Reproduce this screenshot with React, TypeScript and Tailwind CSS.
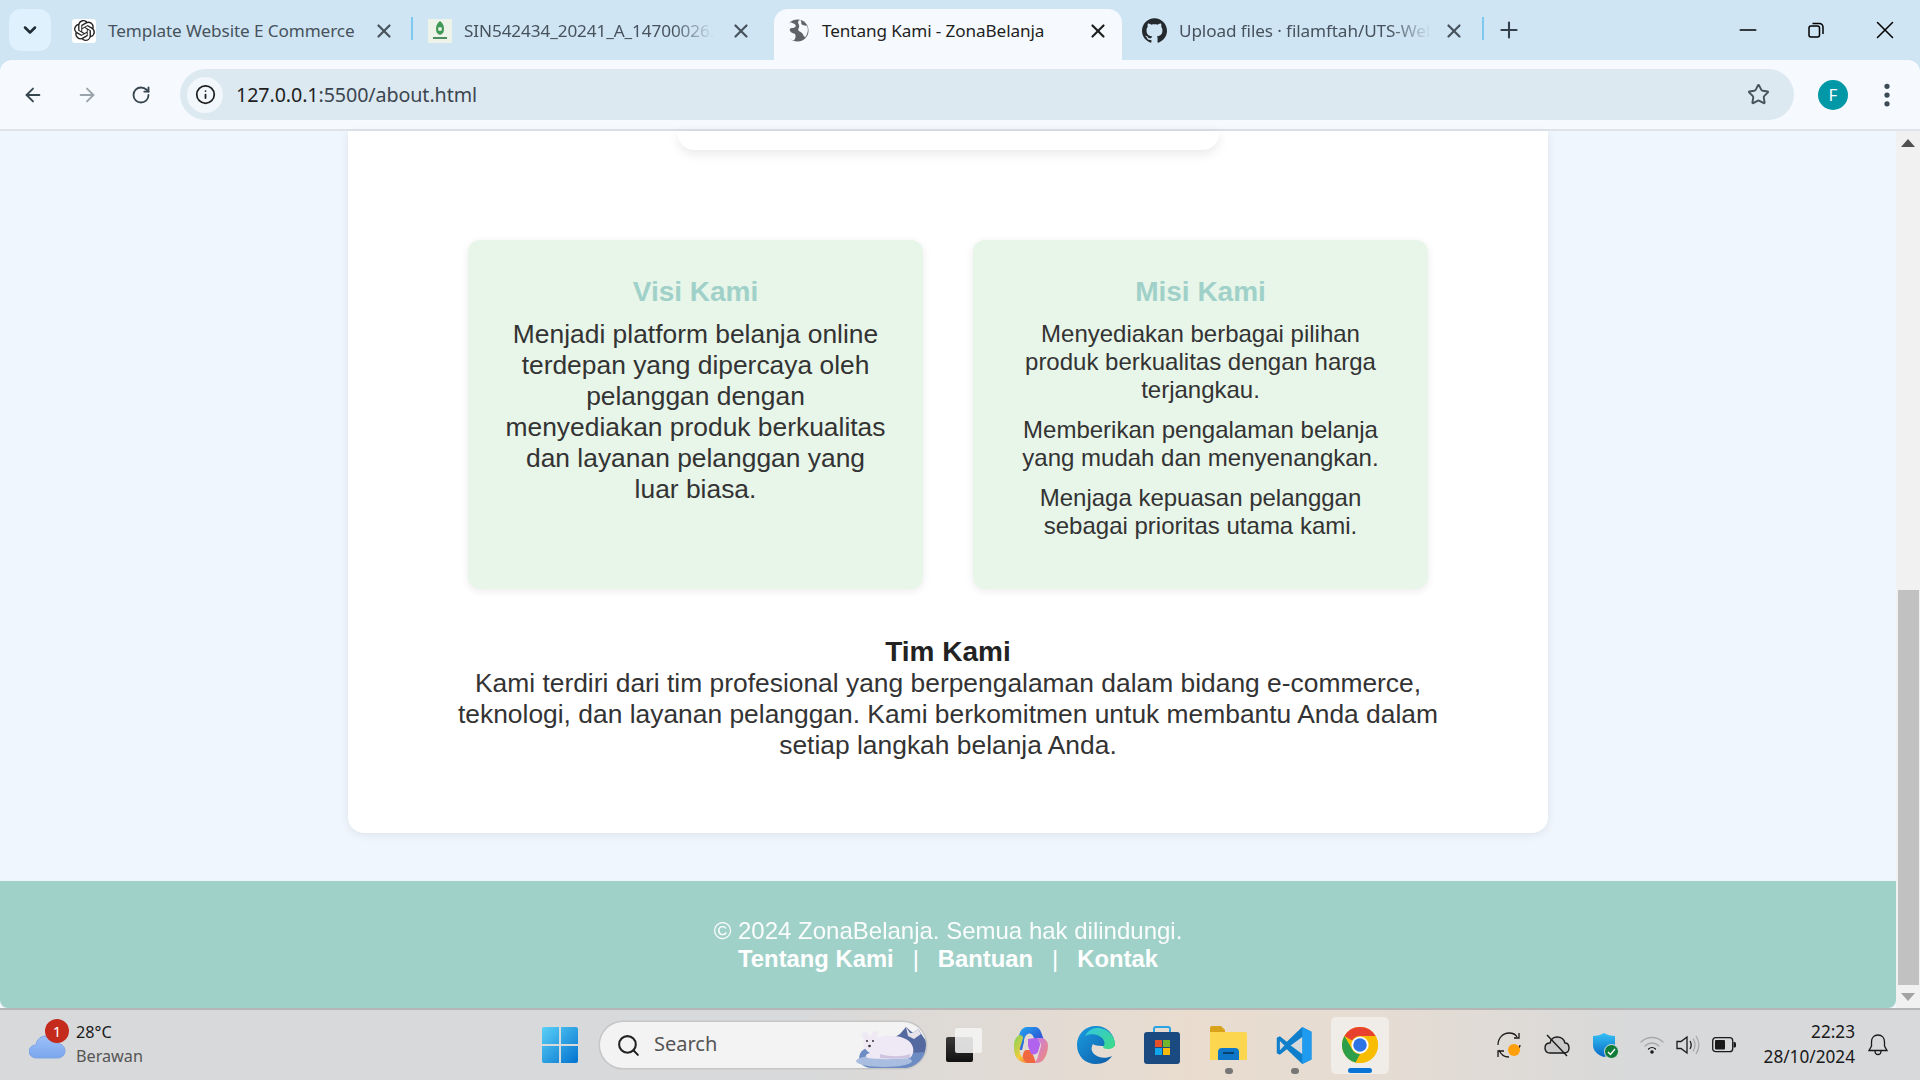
import React from "react";
import { SiOpenai, SiGithub } from "react-icons/si";
import { ArrowLeft, ArrowRight, RotateCw, Info, Star, Plus, X, Minus, ChevronDown, Search, MoreVertical } from "lucide-react";

const Sep = () => <div className="w-[2px] h-[23px] bg-[#7cc8ef] shrink-0" />;

function Tab({ icon, title, w, active, fade, sep, iconBox, closeMr }: { icon: React.ReactNode; title: string; w: string; active?: boolean; fade?: boolean; sep?: boolean; iconBox: string; closeMr: string }) {
  return (
    <div className={`${w} h-[51px] shrink-0 flex items-center relative pb-[8px] ${active ? "bg-[#f6fafe] rounded-t-[14px]" : ""}`}>
      <div className={`w-[24px] h-[24px] ${iconBox} shrink-0 flex items-center justify-center`}>{icon}</div>
      <div className={`whitespace-nowrap text-[17.15px] tracking-[-0.1px] ${active ? "text-[#1f1f1f]" : "text-[#47525c]"} ${fade ? "[mask-image:linear-gradient(90deg,#000_82%,transparent_98%)]" : ""}`}>{title}</div>
      <div className={`ml-auto ${closeMr} shrink-0`}><X size={22} strokeWidth={2.4} className={active ? "text-[#1f1f1f]" : "text-[#47525c]"} /></div>
      {sep && <div className="absolute right-[-1px] top-[8px]"><Sep /></div>}
    </div>
  );
}

const Globe = () => (
  <svg width="23" height="23" viewBox="0 0 24 24">
    <circle cx="12" cy="12" r="11.5" fill="#5f6368" />
    <path d="M5 3.5c2 1.5 4 1 5 3s-2 3-4 3-3 2-1 4 5 1 5 4-1 4-2 5c-5-1-9-6-9-11 0-3 2-6 6-8zM15 1c2 2 0 4 2 5s4 1 5 1c2 5 0 9-2 12-2-1-2-4-4-5s-4-2-3-4 1-3 0-5 0-4 2-4z" fill="#f6fafe" />
  </svg>
);

const Thesis = () => (
  <div className="w-[24px] h-[24px] bg-[#eef3ea] flex items-center justify-center">
    <svg width="16" height="22" viewBox="0 0 16 22">
      <path d="M8 1c3 2 4 5 4 8s-1 5-4 6c-3-1-4-3-4-6s1-6 4-8z" fill="#3f9a57" />
      <circle cx="8" cy="9" r="2" fill="#e6efe2" />
      <rect x="1" y="17" width="14" height="2" fill="#4b8d5f" />
    </svg>
  </div>
);

const Cloud = () => (
  <svg width="37" height="26" viewBox="0 0 37 26">
    <defs><linearGradient id="c" x1="0" y1="0" x2="0" y2="1"><stop offset="0" stopColor="#9cc0fa" /><stop offset="1" stopColor="#7ba6ec" /></linearGradient></defs>
    <path d="M8 25C3 25 0 22 0 18.500S3 12 7 12C8 6 12 3 17 3c5 0 8 3 9 7 6 0 10 3 10 8 0 4-3 7-8 7z" fill="url(#c)" stroke="#7fa5e6" strokeWidth="1" />
  </svg>
);

const WinLogo = () => (
  <svg width="36" height="36" viewBox="0 0 36 36">
    <defs><linearGradient id="w" x1="0" y1="0" x2="1" y2="1"><stop offset="0" stopColor="#5ad0f7" /><stop offset="1" stopColor="#0272cf" /></linearGradient></defs>
    <path d="M2 0h15v17H0V2a2 2 0 012-2zM19 0h15a2 2 0 012 2v15H19zM0 19h17v17H2a2 2 0 01-2-2zM19 19h17v15a2 2 0 01-2 2H19z" fill="url(#w)" />
  </svg>
);

const Bear = () => (
  <svg width="76" height="44" viewBox="0 0 76 44">
    <path d="M40 16l10-6 6-7 7 6 5-4 8 12v27H30z" fill="#53699f" />
    <path d="M56 3l4 6 3 0 5-4 3 5-7 5-6-3z" fill="#e5e2ea" />
    <path d="M10 30C14 22 24 22 40 26s36 2 36 2v16H22C12 44 7 37 10 30z" fill="#6d8cc4" />
    <ellipse cx="34" cy="37" rx="28" ry="6" fill="#a9bde0" />
    <path d="M14 14c4-4 10-3 13 0 10-4 26-3 33 4 5 6 4 12 0 16-12 1-28 2-42 0-3-1-3-4 2-5-6-3-8-10-6-15z" fill="#efe8f5" />
    <path d="M30 30c10 3 22 3 30 0v4c-12 1-22 1-30 0z" fill="#cfc4e0" />
    <circle cx="15" cy="11" r="3" fill="#efe8f5" /><circle cx="25" cy="10" r="3" fill="#efe8f5" />
    <circle cx="17" cy="17" r="1" fill="#333" /><circle cx="23" cy="17" r="1" fill="#333" /><circle cx="19.500" cy="22" r="1.300" fill="#333" />
  </svg>
);

const TaskView = () => (
  <svg width="36" height="34" viewBox="0 0 36 34">
    <defs><linearGradient id="tv" x1="0" y1="0" x2="0" y2="1"><stop offset="0" stopColor="#3a3a3a" /><stop offset="1" stopColor="#111" /></linearGradient></defs>
    <rect x="0" y="9" width="27" height="25" rx="2" fill="url(#tv)" />
    <rect x="9" y="0" width="27" height="25" rx="2" fill="#f4f4f4" fillOpacity="0.88" />
  </svg>
);

const Copilot = () => (
  <svg width="38" height="38" viewBox="0 0 38 38">
    <defs>
      <linearGradient id="cp1" x1="0" y1="0" x2="1" y2="1"><stop offset="0" stopColor="#1fb0f2" /><stop offset="0.6" stopColor="#2b62d8" /><stop offset="1" stopColor="#6d45dc" /></linearGradient>
      <linearGradient id="cp2" x1="0" y1="0" x2="1" y2="1"><stop offset="0" stopColor="#7cd65a" /><stop offset="0.55" stopColor="#f6c93c" /><stop offset="1" stopColor="#f0573f" /></linearGradient>
      <linearGradient id="cp3" x1="0" y1="0" x2="1" y2="1"><stop offset="0" stopColor="#c77bf2" /><stop offset="1" stopColor="#f08c6a" /></linearGradient>
    </defs>
    <path d="M8 10C9 5 11 2 15 1h9c3 0 5 2 6 5l3 8h-9l-2-4c-1-2-3-3-5-2-3 1-4 5-4 8l-2 8c-3 0-7-4-6-10z" fill="url(#cp1)" />
    <path d="M3 19c0-4 2-8 5-10 3 0 4 1 4 3l-3 10c-1 4 0 7 3 10 2 2 5 4 9 5h-3c-7 0-12-3-14-8-1-3-1-7-1-10z" fill="url(#cp2)" />
    <path d="M15 24h4l3 5c1 2 3 8 3 8h-6c-3 0-6-2-7-5-1-2 1-8 3-8z" fill="#f0683f" />
    <path d="M24 12h7c4 1 6 4 6 8 0 5-2 10-4 13-2 3-5 4-9 4-1 0 3-4 3-7l3-10c0-4-3-7-6-8z" fill="url(#cp3)" />
    <path d="M17 13l7-1c3 1 5 3 5 7l-2 7c-1 2-4 3-7 2l-3-8z" fill="#b163ee" />
  </svg>
);

const Edge = () => (
  <svg width="38" height="38" viewBox="0 0 38 38">
    <defs>
      <linearGradient id="e1" x1="0" y1="0" x2="1" y2="1"><stop offset="0" stopColor="#34c6e0" /><stop offset="1" stopColor="#3ddc84" /></linearGradient>
      <linearGradient id="e2" x1="0" y1="0" x2="1" y2="1"><stop offset="0" stopColor="#1b9de2" /><stop offset="1" stopColor="#0c59a4" /></linearGradient>
    </defs>
    <path d="M19 0C8 0 0 8 0 19c0 11 8 19 19 19 7 0 13-3 16-8-6 3-14 2-18-2-3-3-3-7-1-10 2 2 9 2 15 2h7C38 8 30 0 19 0z" fill="url(#e2)" />
    <path d="M8 10C11 4 17 1 23 2c8 1 15 8 15 16 0 3-3 5-7 5-3 0-5-1-5-2 2-2 2-5 0-8-4-5-12-6-18-3z" fill="url(#e1)" />
  </svg>
);

const Store = () => (
  <svg width="36" height="38" viewBox="0 0 36 38">
    <path d="M10 6V3a2 2 0 012-2h12a2 2 0 012 2v3" fill="none" stroke="#29a4e6" strokeWidth="2" />
    <rect x="0" y="6" width="36" height="32" rx="3" fill="#1a4a80" />
    <rect x="11" y="14" width="7" height="7" fill="#e8502a" /><rect x="19" y="14" width="7" height="7" fill="#72b62e" />
    <rect x="11" y="22" width="7" height="7" fill="#11a5ee" /><rect x="19" y="22" width="7" height="7" fill="#f9b90a" />
  </svg>
);

const Folder = () => (
  <svg width="37" height="34" viewBox="0 0 37 34">
    <path d="M0 2a2 2 0 012-2h9l4 4h-15z" fill="#d8a21a" /><rect y="4" width="15" height="4" fill="#d8a21a" />
    <path d="M0 6h35a2 2 0 012 2v26H0z" fill="#fdd64f" />
    <path d="M8 34V26a4 4 0 014-4h13a4 4 0 014 4v8z" fill="#0d76c9" />
    <rect x="13" y="26" width="11" height="2" fill="#07436f" />
  </svg>
);

const VSCode = () => (
  <svg width="37" height="37" viewBox="0 0 24 24">
    <path d="M17 0l6 3v18l-6 3-10-9.500L2.500 18 .5 17v-10l2-1L7 9.500z" fill="#0f7fcc" />
    <path d="M17 0l6 3v18l-6 3z" fill="#1f9cf0" />
    <path d="M17 6.500L9.500 12l7.500 5.500z" fill="#d8d9da" />
    <path d="M2.500 9l3 3-3 3z" fill="#d8d9da" />
  </svg>
);

const Chrome = () => (
  <svg width="36" height="36" viewBox="0 0 48 48">
    <circle cx="24" cy="24" r="24" fill="#f8bd00" />
    <path d="M24 0a24 24 0 0120.800 12H24a12 12 0 00-10.400 6L3.200 12A24 24 0 0124 0z" fill="#e8412f" />
    <path d="M3.200 12l10.400 18a12 12 0 0010.400 6l-6 11.300A24 24 0 013.200 12z" fill="#2d9e4a" />
    <path d="M44.800 12A24 24 0 0118 47.300L34.400 30A12 12 0 0024 12z" fill="#f8bd00" />
    <circle cx="24" cy="24" r="11.500" fill="#fff" />
    <circle cx="24" cy="24" r="9" fill="#2f74e4" />
  </svg>
);

const Sync = () => (
  <svg width="26" height="26" viewBox="0 0 26 26" fill="none" stroke="#1a1a1a" strokeWidth="1.300">
    <path d="M2 13C2 6 7 1 13 1c4 0 7 2 8 4M23 1v5h-5M24 13c0 1-.5 2-1 3M3 18c2 5 6 7 10 7M2 25v-6h6" />
    <circle cx="18" cy="18" r="6" fill="#ff9f0a" stroke="none" />
  </svg>
);

const CloudOff = () => (
  <svg width="26" height="24" viewBox="0 0 26 24" fill="none" stroke="#1a1a1a" strokeWidth="1.400">
    <path d="M6 20c-3 0-5-2-5-5s2-5 5-5c1-4 4-6 7-6 4 0 7 2 8 6 3 0 4 2 4 5s-2 5-5 5z" fill="#c9c9c9" />
    <path d="M3 2l20 21" />
  </svg>
);

const Shield = () => (
  <div className="relative w-[24px] h-[24px]">
    <svg width="22" height="24" viewBox="0 0 22 24">
      <defs><linearGradient id="s" x1="0" y1="0" x2="0" y2="1"><stop offset="0" stopColor="#34c0f5" /><stop offset="1" stopColor="#0a6ac7" /></linearGradient></defs>
      <path d="M11 0c3 2 7 3 11 3v9c0 6-5 10-11 12C5 22 0 18 0 12V3c4 0 8-1 11-3z" fill="url(#s)" />
    </svg>
    <svg className="absolute right-[-2px] bottom-[-2px]" width="15" height="15" viewBox="0 0 15 15">
      <circle cx="7.500" cy="7.500" r="7" fill="#0f7b38" stroke="#dfe4e0" />
      <path d="M4 8l2.500 2.500L11 5" fill="none" stroke="#fff" strokeWidth="1.400" />
    </svg>
  </div>
);

const Wifi = () => (
  <svg width="24" height="20" viewBox="0 0 24 20" fill="none" strokeWidth="1.300" strokeLinecap="round">
    <path d="M1 7c6-6 16-6 22 0" stroke="#a8a8a8" />
    <path d="M5 11c4-4 10-4 14 0" stroke="#a8a8a8" />
    <path d="M8.500 14c2-1.800 5-1.800 7 0" stroke="#1a1a1a" />
    <circle cx="12" cy="17" r="1.800" fill="#1a1a1a" />
  </svg>
);

const Speaker = () => (
  <svg width="24" height="20" viewBox="0 0 24 20" fill="none" strokeWidth="1.300">
    <path d="M1 6.500h4L11 2v16l-6-4.500H1z" stroke="#1a1a1a" />
    <path d="M14 6c1.500 2.500 1.500 5.500 0 8" stroke="#1a1a1a" />
    <path d="M17 3.500c2.500 4 2.500 9 0 13M20 1c3.500 5.500 3.500 12.500 0 18" stroke="#a8a8a8" />
  </svg>
);

const Battery = () => (
  <svg width="24" height="16" viewBox="0 0 24 16" fill="none">
    <rect x="0.700" y="0.700" width="20" height="14" rx="3" stroke="#1a1a1a" strokeWidth="1.300" />
    <rect x="3" y="3" width="10" height="9.500" rx="1" fill="#1a1a1a" />
    <path d="M21.500 5h1a1.500 1.500 0 011.500 1.500v2.500a1.500 1.500 0 01-1.500 1.500h-1z" fill="#1a1a1a" />
  </svg>
);

const Bell = () => (
  <svg width="20" height="22" viewBox="0 0 20 22" fill="none" stroke="#1a1a1a" strokeWidth="1.300">
    <path d="M10 1c4 0 6.500 3 6.500 7v4l2.500 4.500H1L3.500 12V8c0-4 2.500-7 6.500-7zM7 17c0 2 1.300 3.500 3 3.500s3-1.500 3-3.500" />
  </svg>
);

const RestoreIcon = () => (
  <svg width="16" height="16" viewBox="0 0 16 16" fill="none" stroke="#000" strokeWidth="1.500">
    <rect x="1" y="4" width="10.500" height="11" rx="2" />
    <path d="M4.500 1.500h7a3.500 3.500 0 013.500 3.500v7" />
  </svg>
);

export default function App() {
  return (
    <div className="w-[1920px] h-[1080px] flex flex-col overflow-hidden bg-[#cfe5f3] font-['Noto_Sans',sans-serif]">
      {/* Tab strip */}
      <div className="h-[60px] shrink-0 flex items-end bg-[#cfe5f3]">
        <div className="w-[42px] h-[42px] ml-[9px] mb-[9px] mr-[9px] rounded-[12px] bg-[#def1fd] shrink-0 flex items-center justify-center">
          <ChevronDown size={20} strokeWidth={3} className="text-[#1f2a33]" />
        </div>
        <Tab w="w-[352px]" iconBox="ml-[12px] mr-[12px]" closeMr="mr-[17px]" title="Template Website E Commerce" sep
          icon={<div className="w-[24px] h-[24px] bg-white rounded-[3px] flex items-center justify-center"><SiOpenai size={21} className="text-[#222]" /></div>} />
        <Tab w="w-[362px]" iconBox="ml-[16px] mr-[12px]" closeMr="mr-[22px]" fade title="SIN542434_20241_A_147000262" icon={<Thesis />} />
        <Tab w="w-[348px]" iconBox="ml-[11px] mr-[13px]" closeMr="mr-[13px]" title="Tentang Kami - ZonaBelanja" active icon={<Globe />} />
        <Tab w="w-[361px]" iconBox="ml-[20px] mr-[13px]" closeMr="mr-[18px]" fade title="Upload files · filamftah/UTS-Web" sep icon={<SiGithub size={25} className="text-[#24292e] shrink-0" />} />
        <div className="w-[52px] h-[51px] flex items-center justify-center pb-[9px]"><Plus size={26} strokeWidth={1.9} className="text-[#33404a]" /></div>
        <div className="flex-1" />
        <div className="flex h-[60px] items-center pb-[1px] mr-[20px]">
          <Minus size={26} strokeWidth={1.6} className="text-black" />
          <div className="ml-[47px]"><RestoreIcon /></div>
          <X size={30} strokeWidth={1.2} className="ml-[46px] text-black" />
        </div>
      </div>

      {/* Toolbar */}
      <div className="h-[71px] shrink-0 flex items-center bg-[#f6fafe] rounded-t-[12px] border-b-2 border-[#dfe4ea]">
        <ArrowLeft size={22} strokeWidth={2} className="ml-[22px] text-[#37474f] shrink-0" />
        <ArrowRight size={22} strokeWidth={2} className="ml-[32px] text-[#9aa3a9] shrink-0" />
        <RotateCw size={20} strokeWidth={2.2} className="ml-[33px] text-[#37474f] shrink-0" />
        <div className="ml-[29px] w-[1614px] h-[51px] shrink-0 rounded-[26px] bg-[#dce9f1] flex items-center">
          <div className="ml-[7px] w-[36px] h-[36px] rounded-full bg-[#f1f7fb] flex items-center justify-center"><Info size={21} strokeWidth={2} className="text-[#1f1f1f]" /></div>
          <div className="ml-[13px] text-[19.7px] text-[#1f1f1f] tracking-[-0.1px]">127.0.0.1<span className="text-[#3c4650]">:5500/about.html</span></div>
          <Star size={23} strokeWidth={2} className="ml-auto mr-[24px] text-[#47525c]" />
        </div>
        <div className="ml-[24px] w-[30px] h-[30px] rounded-full bg-[#0097a7] flex items-center justify-center text-white text-[17px] shrink-0">F</div>
        <MoreVertical size={30} strokeWidth={2.2} className="ml-[24px] text-[#3c4a54] shrink-0" />
      </div>

      {/* Content */}
      <div className="flex-1 min-h-0 flex">
        <div className="flex-1 min-w-0 bg-[#eff6fe] flex flex-col font-['Liberation_Sans',sans-serif] text-[#333]">
          <div className="w-[1200px] h-[702px] mx-auto bg-white rounded-b-[16px] shadow-[0_2px_10px_rgba(0,0,0,0.08)] flex flex-col items-center shrink-0">
            <div className="w-[541px] h-[19px] bg-white rounded-b-[16px] shadow-[0_4px_12px_rgba(0,0,0,0.09)]" />
            <div className="mt-[90px] w-[960px] flex gap-[50px] h-[349px]">
              <div className="w-[455px] shrink-0 bg-[#e8f5e9] rounded-[12px] shadow-[0_2px_8px_rgba(0,0,0,0.08)] pt-[35px] px-[36px] text-center">
                <h2 className="text-[28px] leading-[34px] font-bold text-[#a0d1c9]">Visi Kami</h2>
                <p className="mt-[10px] text-[26.4px] leading-[31.1px]">Menjadi platform belanja online terdepan yang dipercaya oleh pelanggan dengan<br />menyediakan produk berkualitas dan layanan pelanggan yang luar biasa.</p>
              </div>
              <div className="w-[455px] shrink-0 bg-[#e8f5e9] rounded-[12px] shadow-[0_2px_8px_rgba(0,0,0,0.08)] pt-[35px] px-[32px] text-center">
                <h2 className="text-[28px] leading-[34px] font-bold text-[#a0d1c9]">Misi Kami</h2>
                <p className="mt-[11px] text-[24px] leading-[28px]">Menyediakan berbagai pilihan produk berkualitas dengan harga terjangkau.</p>
                <p className="mt-[12px] text-[24px] leading-[28px]">Memberikan pengalaman belanja yang mudah dan menyenangkan.</p>
                <p className="mt-[12px] text-[24px] leading-[28px]">Menjaga kepuasan pelanggan sebagai prioritas utama kami.</p>
              </div>
            </div>
            <h3 className="mt-[47px] text-[28px] leading-[32px] font-bold text-[#222]">Tim Kami</h3>
            <p className="w-[1000px] text-center text-[26.4px] leading-[31px]">Kami terdiri dari tim profesional yang berpengalaman dalam bidang e-commerce, teknologi, dan layanan pelanggan. Kami berkomitmen untuk membantu Anda dalam setiap langkah belanja Anda.</p>
          </div>
          <div className="mt-auto h-[127px] bg-[#a0d1c9] rounded-b-[8px] text-white text-center pt-[36px] shrink-0">
            <div className="text-[24px] leading-[28px] opacity-95">© 2024 ZonaBelanja. Semua hak dilindungi.</div>
            <div className="text-[23.8px] leading-[28px] flex justify-center">
              <span className="font-bold">Tentang Kami</span><span className="mx-[19px]">|</span>
              <span className="font-bold">Bantuan</span><span className="mx-[19px]">|</span>
              <span className="font-bold">Kontak</span>
            </div>
          </div>
        </div>
        <div className="w-[24px] shrink-0 bg-[#f1f1f1] flex flex-col items-center">
          <svg width="14" height="8" viewBox="0 0 14 8" className="mt-[8px] shrink-0"><path d="M7 0l7 8H0z" fill="#505050" /></svg>
          <div className="mt-[443px] w-[21px] h-[395px] bg-[#c1c1c1] shrink-0" />
          <svg width="14" height="8" viewBox="0 0 14 8" className="mt-[8px] shrink-0"><path d="M7 8l7-8H0z" fill="#a3a3a3" /></svg>
        </div>
      </div>

      {/* Taskbar */}
      <div className="h-[72px] shrink-0 flex items-center border-t-2 border-[#b5b5b5] bg-[linear-gradient(90deg,#d8d9da_0%,#d8d9da_42%,#e9dccf_62%,#e5dcd3_72%,#d8d9da_85%,#d8d9da_100%)] font-['Noto_Sans',sans-serif]">
        <div className="relative ml-[29px] w-[37px] h-[30px] mt-[6px] shrink-0">
          <Cloud />
          <div className="absolute -top-[14px] left-[16px] w-[24px] h-[24px] rounded-full bg-[#c42b1c] text-white text-[15px] flex items-center justify-center">1</div>
        </div>
        <div className="ml-[10px] w-[80px] shrink-0 leading-[24px] text-[16.2px] pb-[3px]">
          <div className="text-[#1a1a1a]">28°C</div>
          <div className="text-[#555]">Berawan</div>
        </div>
        <div className="ml-[386px] shrink-0"><WinLogo /></div>
        <div className="ml-[22px] w-[326px] h-[46px] shrink-0 rounded-[23px] bg-[#f3f3f3] shadow-[0_0_0_1.5px_#c6c6c6] flex items-center relative overflow-hidden">
          <Search size={25} strokeWidth={2} className="ml-[16px] text-[#222]" />
          <span className="ml-[13px] text-[20px] text-[#555] pb-[2px]">Search</span>
          <div className="absolute right-0 bottom-0"><Bear /></div>
        </div>
        <div className="ml-[20px] shrink-0 -mr-[8px]"><TaskView /></div>
        <div className="ml-[37px] shrink-0"><Copilot /></div>
        <div className="ml-[28px] shrink-0"><Edge /></div>
        <div className="ml-[29px] shrink-0"><Store /></div>
        <div className="ml-[30px] w-[37px] h-[38px] flex flex-col items-center shrink-0 relative">
          <Folder />
          <div className="absolute -bottom-[10px] w-[8px] h-[6px] rounded-full bg-[#777]" />
        </div>
        <div className="ml-[29px] shrink-0 relative flex justify-center">
          <VSCode />
          <div className="absolute -bottom-[10px] w-[8px] h-[6px] rounded-full bg-[#777]" />
        </div>
        <div className="ml-[18px] w-[58px] h-[57px] rounded-[5px] bg-[#f0ece8] flex items-center justify-center relative shrink-0">
          <Chrome />
          <div className="absolute bottom-[1px] w-[24px] h-[5px] rounded-full bg-[#0a74d6]" />
        </div>
        <div className="ml-[107px] shrink-0"><Sync /></div>
        <div className="ml-[22px] shrink-0"><CloudOff /></div>
        <div className="ml-[23px] shrink-0"><Shield /></div>
        <div className="ml-[23px] shrink-0"><Wifi /></div>
        <div className="ml-[12px] shrink-0"><Speaker /></div>
        <div className="ml-[12px] shrink-0"><Battery /></div>
        <div className="ml-[21px] w-[98px] shrink-0 text-right text-[17.2px] leading-[25px] text-[#1a1a1a] pb-[3px]">
          <div>22:23</div>
          <div className="whitespace-nowrap">28/10/2024</div>
        </div>
        <div className="ml-[13px] shrink-0"><Bell /></div>
      </div>
    </div>
  );
}
